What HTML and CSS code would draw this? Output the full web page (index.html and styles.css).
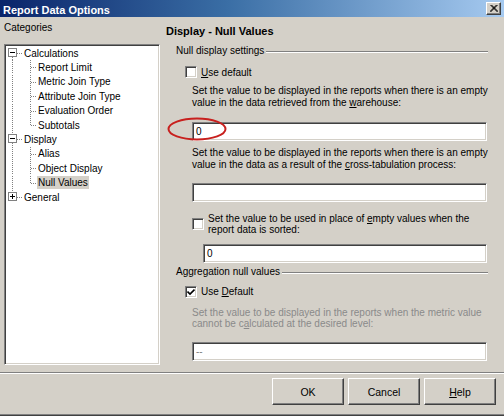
FILE: index.html
```html
<!DOCTYPE html>
<html lang="en">
<head>
    <meta charset="UTF-8">
    <title>Report Data Options</title>
    <link rel="stylesheet" href="styles.css">
</head>
<body>
    <!-- tree connector pieces, reused by every tree row -->
    <svg class="defs" width="0" height="0">
        <symbol id="root-first" viewBox="0 0 17 14.4">
            <line class="dots" x1="6.5" y1="11" x2="6.5" y2="14.4"/>
            <line class="dots" x1="11" y1="7.5" x2="16" y2="7.5"/>
            <rect class="exp" x="2.5" y="3" width="8" height="8"/>
            <line class="sign" x1="4" y1="7" x2="9" y2="7"/>
        </symbol>
        <symbol id="root-mid" viewBox="0 0 17 14.4">
            <line class="dots" x1="6.5" y1="0" x2="6.5" y2="3"/>
            <line class="dots" x1="6.5" y1="11" x2="6.5" y2="14.4"/>
            <line class="dots" x1="11" y1="7.5" x2="16" y2="7.5"/>
            <rect class="exp" x="2.5" y="3" width="8" height="8"/>
            <line class="sign" x1="4" y1="7" x2="9" y2="7"/>
        </symbol>
        <symbol id="root-last" viewBox="0 0 17 14.4">
            <line class="dots" x1="6.5" y1="0" x2="6.5" y2="3"/>
            <line class="dots" x1="11" y1="7.5" x2="16" y2="7.5"/>
            <rect class="exp" x="2.5" y="3" width="8" height="8"/>
            <line class="sign" x1="4" y1="7" x2="9" y2="7"/>
            <line class="sign" x1="6.5" y1="4.5" x2="6.5" y2="9.5"/>
        </symbol>
        <symbol id="child" viewBox="0 0 31 14.4">
            <line class="dots" x1="6.5" y1="0" x2="6.5" y2="14.4"/>
            <line class="dots" x1="24.5" y1="0" x2="24.5" y2="14.4"/>
            <line class="dots" x1="25" y1="7.5" x2="31" y2="7.5"/>
        </symbol>
        <symbol id="child-last" viewBox="0 0 31 14.4">
            <line class="dots" x1="6.5" y1="0" x2="6.5" y2="14.4"/>
            <line class="dots" x1="24.5" y1="0" x2="24.5" y2="7.5"/>
            <line class="dots" x1="25" y1="7.5" x2="31" y2="7.5"/>
        </symbol>
    </svg>

    <div class="dialog">
        <div class="titlebar">
            <span class="title">Report Data Options</span>
            <span class="close-btn">
                <svg width="8" height="7" viewBox="0 0 8 7">
                    <path d="M0.5 0 L7.5 7 M1.5 0 L8 6.5 M7.5 0 L0.5 7 M6.5 0 L0 6.5" stroke="#000" stroke-width="1"/>
                </svg>
            </span>
        </div>

        <div class="content">
            <div class="sidebar">
                <div class="label">Categories</div>
                <div class="tree">
                    <div class="node"><svg class="gut"><use href="#root-first"/></svg><span class="text">Calculations</span></div>
                    <div class="node"><svg class="gut wide"><use href="#child"/></svg><span class="text">Report Limit</span></div>
                    <div class="node"><svg class="gut wide"><use href="#child"/></svg><span class="text">Metric Join Type</span></div>
                    <div class="node"><svg class="gut wide"><use href="#child"/></svg><span class="text">Attribute Join Type</span></div>
                    <div class="node"><svg class="gut wide"><use href="#child"/></svg><span class="text">Evaluation Order</span></div>
                    <div class="node"><svg class="gut wide"><use href="#child-last"/></svg><span class="text">Subtotals</span></div>
                    <div class="node"><svg class="gut"><use href="#root-mid"/></svg><span class="text">Display</span></div>
                    <div class="node"><svg class="gut wide"><use href="#child"/></svg><span class="text">Alias</span></div>
                    <div class="node"><svg class="gut wide"><use href="#child"/></svg><span class="text">Object Display</span></div>
                    <div class="node"><svg class="gut wide"><use href="#child-last"/></svg><span class="text selected">Null Values</span></div>
                    <div class="node"><svg class="gut"><use href="#root-last"/></svg><span class="text">General</span></div>
                </div>
            </div>

            <div class="panel">
                <div class="panel-title">Display - Null Values</div>

                <div class="group group-first"><span>Null display settings</span><i class="rule"></i></div>
                <div class="check-row row-use">
                    <span class="box"></span>
                    <span><u>U</u>se default</span>
                </div>
                <p class="note">Set the value to be displayed in the reports when there is an empty<br>value in the data retrieved from the <u>w</u>arehouse:</p>
                <div class="field field-1">
                    <span>0</span>
                    <svg class="mark" width="60" height="24" viewBox="0 0 60 24">
                        <ellipse cx="30" cy="12" rx="28.5" ry="10.5" fill="none" stroke="#c8201e" stroke-width="2"/>
                    </svg>
                </div>
                <p class="note">Set the value to be displayed in the reports when there is an empty<br>value in the data as a result of the <u>c</u>ross-tabulation process:</p>
                <div class="field field-2"></div>

                <div class="check-row check-multi">
                    <span class="box"></span>
                    <span>Set the value to be used in place of <u>e</u>mpty values when the<br>report data is sorted:</span>
                </div>
                <div class="field field-3"><span>0</span></div>

                <div class="group group-second"><span>Aggregation null values</span><i class="rule"></i></div>
                <div class="check-row row-default">
                    <span class="box">
                        <svg width="8" height="8" viewBox="0 0 8 8">
                            <path d="M0.5 3.5 L3 6 L7.5 1.5" fill="none" stroke="#000" stroke-width="1.6"/>
                        </svg>
                    </span>
                    <span>Use <u>D</u>efault</span>
                </div>
                <p class="note note-off">Set the value to be displayed in the reports when the metric value<br>cannot be c<u>a</u>lculated at the desired level:</p>
                <div class="field field-4"><span class="dim">--</span></div>
            </div>
        </div>

        <div class="footer">
            <button class="btn">OK</button>
            <button class="btn">Cancel</button>
            <button class="btn"><u>H</u>elp</button>
        </div>
    </div>
</body>
</html>
```

FILE: styles.css
```css
body {
    margin: 0;
    font-family: "Liberation Sans", Arial, sans-serif;
    font-size: 10px;
    color: #000;
    background: #d4d0c8;
}
.defs {
    position: absolute;
}
.dialog {
    width: 504px;
    height: 416px;
    box-sizing: border-box;
    display: flex;
    flex-direction: column;
    background: #d4d0c8;
    box-shadow: inset 0 -1px #404040, inset 0 -2px #808080;
}

/* title bar */
.titlebar {
    height: 17px;
    display: flex;
    align-items: center;
    padding: 0 3px 0 3px;
    background: linear-gradient(to right, #0a246a, #3a6ea5 45%, #a6caf0);
}
.title {
    flex: 1;
    color: #fff;
    font-size: 11px;
    font-weight: bold;
    padding-top: 2px;
}
.close-btn {
    width: 15px;
    height: 13px;
    box-sizing: border-box;
    display: flex;
    align-items: center;
    justify-content: center;
    background: #d4d0c8;
    border: 1px solid;
    border-color: #fff #404040 #404040 #fff;
    box-shadow: inset -1px -1px #808080;
}

.content {
    height: 355px;
    display: flex;
}

/* categories tree */
.sidebar {
    width: 162px;
    padding-left: 4px;
    box-sizing: border-box;
}
.label {
    margin-top: 4px;
    line-height: 14px;
}
.tree {
    margin-top: 9px;
    width: 156px;
    height: 321px;
    box-sizing: border-box;
    background: #fff;
    border: 1px solid;
    border-color: #808080 #fff #fff #808080;
    box-shadow: inset 1px 1px #404040, inset -1px -1px #d4d0c8;
    padding: 1px 0 0 1px;
}
.node {
    height: 14.4px;
    display: flex;
    align-items: center;
}
.gut {
    width: 17px;
    height: 14.4px;
    flex: none;
}
.gut.wide {
    width: 31px;
}
.dots {
    stroke: #808080;
    stroke-width: 1;
    stroke-dasharray: 1 1;
    shape-rendering: crispEdges;
}
.exp {
    fill: #fff;
    stroke: #808080;
    shape-rendering: crispEdges;
}
.sign {
    stroke: #000;
    shape-rendering: crispEdges;
}
.text {
    padding: 0 1px;
    line-height: 13px;
    white-space: nowrap;
}
.text.selected {
    background: #d4d0c8;
}

/* settings panel */
.panel {
    flex: 1;
    padding: 0 17px 0 6px;
}
.panel-title {
    margin-top: 7px;
    line-height: 14px;
    font-size: 11px;
    font-weight: bold;
}
.group {
    height: 14px;
    display: flex;
    align-items: center;
    margin-left: 10px;
}
.group-first {
    margin-top: 5px;
}
.group-second {
    margin-top: 1px;
}
.rule {
    flex: 1;
    margin: 3px 0 0 2px;
    border-top: 1px solid #808080;
    border-bottom: 1px solid #fff;
}
.check-row {
    display: flex;
    align-items: center;
    gap: 4px;
    height: 14px;
}
.row-use {
    margin: 8px 0 0 19px;
}
.row-default {
    margin: 6.4px 0 0 19px;
}
.box {
    width: 12px;
    height: 12px;
    flex: none;
    box-sizing: border-box;
    display: flex;
    align-items: center;
    justify-content: center;
    background: #fff;
    border: 1px solid;
    border-color: #808080 #fff #fff #808080;
    box-shadow: inset 1px 1px #404040, inset -1px -1px #d4d0c8;
}
.check-multi {
    height: auto;
    margin: 11px 0 0 26px;
    line-height: 11px;
    white-space: nowrap;
}
.note {
    margin: 6px 0 0 26px;
    line-height: 12.4px;
    white-space: nowrap;
}
.note-off {
    margin-top: 8.5px;
    line-height: 11px;
    color: #8a8a8a;
}
.field {
    position: relative;
    height: 19px;
    box-sizing: border-box;
    display: flex;
    align-items: center;
    margin-left: 26px;
    margin-right: 1px;
    padding-left: 3px;
    background: #fff;
    border: 1px solid;
    border-color: #808080 #fff #fff #808080;
    box-shadow: inset 1px 1px #404040, inset -1px -1px #d4d0c8;
}
.field-1 {
    margin-top: 12px;
}
.field-2 {
    margin-top: 11px;
}
.field-3 {
    margin-top: 9.5px;
    margin-left: 37px;
}
.field-4 {
    margin-top: 13px;
}
.dim {
    color: #808080;
}
.mark {
    position: absolute;
    left: -26px;
    top: -6px;
}

/* dialog buttons */
.footer {
    height: 41px;
    display: flex;
    justify-content: flex-end;
    align-items: flex-start;
    gap: 4px;
    padding: 5px 8px 0 0;
    box-sizing: border-box;
    border-top: 1px solid #808080;
    box-shadow: inset 0 1px #fff;
}
.btn {
    width: 72px;
    height: 27px;
    font: inherit;
    font-size: 10.5px;
    color: #000;
    background: #d4d0c8;
    border: 1px solid;
    border-color: #fff #404040 #404040 #fff;
    box-shadow: inset -1px -1px #808080;
    padding: 0;
}
```
